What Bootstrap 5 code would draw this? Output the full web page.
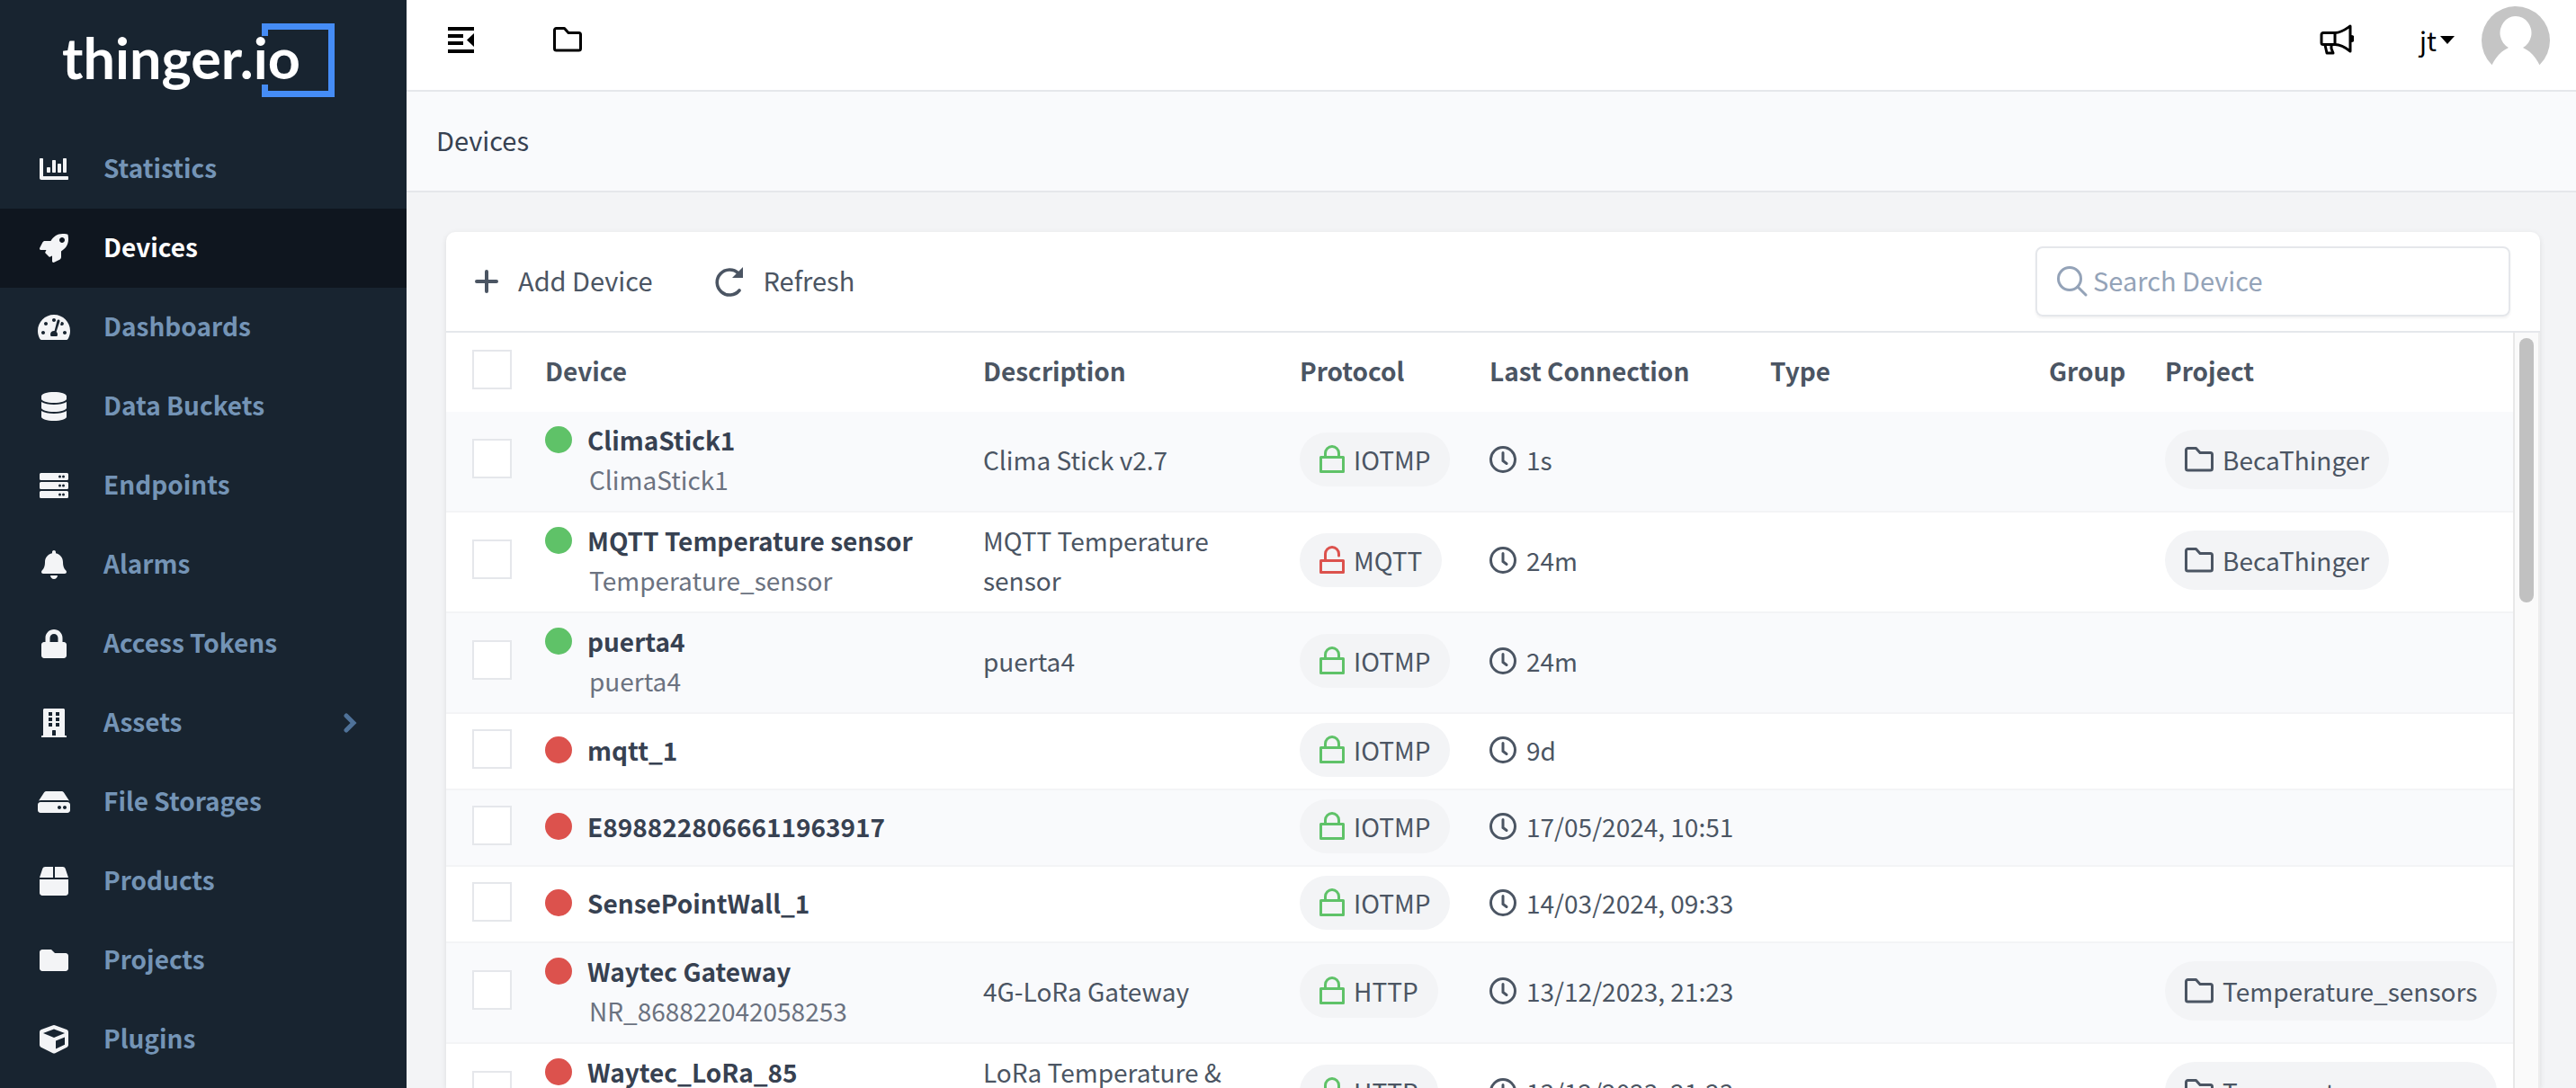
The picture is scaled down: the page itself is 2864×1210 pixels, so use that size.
<!DOCTYPE html>
<html lang="en">
<head>
<meta charset="utf-8">
<meta name="viewport" content="width=device-width, initial-scale=1">
<title>Devices</title>
<link href="https://cdn.jsdelivr.net/npm/bootstrap@5.3.0/dist/css/bootstrap.min.css" rel="stylesheet">
<style>
  :root { --side: #182430; --line: #e5e7eb; --ink: #4b5563; --ink-dark: #374151; }
  body { font-family: "Noto Sans CJK SC", "Open Sans", sans-serif; font-size: 28px; line-height: 44px; color: var(--ink); background: #f3f4f6; height: 100vh; overflow: hidden; }
  svg { display: block; flex: none; }
  a { text-decoration: none; color: inherit; }
  .side-panel { width: 452px; background: var(--side); flex: none; overflow: hidden; }
  .brand-box { height: 144px; padding: 20px 0 0 60px; }
  .side-panel .nav-link { height: 88px; padding: 0 54px 0 36px; color: #7494b6; font-weight: 700; display: flex; align-items: center; }
  .side-panel .nav-link.active { background: #0f161f; color: #fff; }
  .side-icon { width: 48px; margin-right: 31px; display: flex; justify-content: center; flex: none; fill: #f3f4f6; }
  .top-strip { height: 102px; padding: 0 28px 12px 40px; background: #fff; border-bottom: 2px solid var(--line); color: #000; flex: none; font-size: 29px; }
  .plain-btn { border: 0; background: none; padding: 0; color: inherit; display: flex; align-items: center; }
  .top-left { gap: 86px; }
  .top-right { gap: 73px; }
  .user-box { gap: 29px; }
  .crumb-strip { height: 112px; padding: 0 33px; background: #f9fafc; border-bottom: 2px solid var(--line); color: var(--ink-dark); flex: none; font-size: 29px; }
  .page-body { padding: 44px 40px 0 44px; min-height: 0; }
  .device-card { border: 0; border-radius: 10px 10px 0 0; box-shadow: 0 2px 6px rgba(0,0,0,.1); overflow: hidden; min-height: 0; color: inherit; }
  .tool-strip { height: 112px; padding: 0 33px 0 32px; border-bottom: 2px solid var(--line); flex: none; font-size: 29px; }
  .tool-strip .plain-btn { gap: 22px; }
  .tool-group { gap: 67px; }
  .search-box { width: 528px; height: 78px; border: 2px solid var(--line); border-radius: 8px; padding: 0 22px; gap: 6px; box-shadow: 0 2px 3px rgba(0,0,0,.05); color: #94a3b8; }
  .search-box input { border: 0; outline: 0; background: none; padding: 0 0 4px; flex: 1; min-width: 0; color: var(--ink-dark); }
  .search-box input::placeholder { color: #94a3b8; opacity: 1; }
  .device-table { table-layout: fixed; width: 100%; border-collapse: separate; border-spacing: 0; }
  .device-table th { height: 88px; padding: 0 10px 4px; vertical-align: middle; font-weight: 700; }
  .device-table td { height: 85px; padding: 9px 10px 13px; vertical-align: middle; border-bottom: 2px solid #f3f4f6; }
  .device-table tbody tr:nth-child(odd) { background: #f9fafc; }
  .device-table tr > :first-child { padding: 0 0 6px 29px; }
  .device-table .form-check-input { display: block; width: 44px; height: 44px; margin: 0; border: 2px solid var(--line); border-radius: 0; }
  .dot { width: 30px; height: 30px; border-radius: 50%; background: #dc524d; margin-right: 17px; flex: none; }
  .dot.on { background: #5fc268; }
  .dev-name { font-weight: 700; color: var(--ink-dark); }
  .dev-sub { color: #6b7280; padding-left: 49px; }
  .proto-pill { display: inline-flex; align-items: center; gap: 10px; height: 60px; padding: 0 22px; border-radius: 30px; background: #f3f4f6; vertical-align: middle; }
  .proj-pill { display: inline-flex; align-items: center; gap: 10px; height: 66px; padding: 0 22px; border-radius: 33px; background: #f3f4f6; vertical-align: middle; margin: -2px 0; }
  .since { display: flex; align-items: center; gap: 11px; }
  .rail { width: 30px; border-left: 2px solid #e8e8e8; border-right: 2px solid #ededed; background: #fafafa; padding: 6px 5px; flex: none; }
  .rail-thumb { height: 294px; border-radius: 8px; background: #c1c1c1; }
</style>
</head>
<body class="d-flex">
<svg width="0" height="0" class="position-absolute" aria-hidden="true">
  <symbol id="lock" viewBox="0 0 28 32"><g fill="none" stroke="#5fc268" stroke-width="3" stroke-linejoin="round"><path d="M1.500 13.500h25v16h-25z"/><path d="M6.500 13V9a7.500 7.500 0 0 1 15 0v4"/></g></symbol>
  <symbol id="unlock" viewBox="0 0 28 32"><g fill="none" stroke="#dc524d" stroke-width="3" stroke-linejoin="round" stroke-linecap="round"><path d="M1.500 16.500h25v13h-25z"/><path d="M6.500 16V9a7.500 7.500 0 0 1 15 0v2"/></g></symbol>
  <symbol id="clock" viewBox="0 0 30 30"><g fill="none" stroke="#4b5563" stroke-width="3" stroke-linecap="round"><circle cx="15" cy="15" r="13.500"/><path d="M15 7.500V16.500l4 3"/></g></symbol>
  <symbol id="folder" viewBox="0 0 32 28"><path d="M3.500 1.500h9l4.500 5h11.500a2 2 0 0 1 2 2v15.500a2 2 0 0 1-2 2h-25a2 2 0 0 1-2-2V3.500a2 2 0 0 1 2-2z" fill="none" stroke="currentColor" stroke-width="3" stroke-linejoin="round"/></symbol>
</svg>

<nav class="side-panel d-flex flex-column" aria-label="Main">
  <a class="brand-box d-block" href="#" aria-label="thinger.io">
    <svg width="320" height="100" viewBox="0 0 320 100">
      <path d="M234.500 20V9.500h74v75h-74V74" fill="none" stroke="#458cf5" stroke-width="7"/>
      <text x="9" y="68" font-family="Lato, sans-serif" font-weight="700" font-size="63" fill="#fff">thinger.io</text>
    </svg>
  </a>
  <div class="nav flex-column flex-nowrap">
    <a class="nav-link" href="#"><span class="side-icon"><svg width="32" height="32" viewBox="0 0 512 512"><path d="M332.800 320h38.400c6.400 0 12.800-6.400 12.800-12.800V172.800c0-6.400-6.400-12.800-12.800-12.800h-38.400c-6.400 0-12.800 6.400-12.800 12.800v134.400c0 6.400 6.400 12.800 12.800 12.800zm96 0h38.400c6.400 0 12.800-6.400 12.800-12.800V76.800c0-6.400-6.400-12.800-12.800-12.800h-38.400c-6.400 0-12.800 6.400-12.800 12.800v230.400c0 6.400 6.400 12.800 12.800 12.800zm-288 0h38.400c6.400 0 12.800-6.400 12.800-12.800v-70.400c0-6.400-6.400-12.800-12.800-12.800h-38.400c-6.400 0-12.800 6.400-12.800 12.800v70.400c0 6.400 6.400 12.800 12.800 12.800zm96 0h38.400c6.400 0 12.800-6.400 12.800-12.800V108.800c0-6.400-6.400-12.800-12.800-12.800h-38.400c-6.400 0-12.800 6.400-12.800 12.800v198.400c0 6.400 6.400 12.800 12.800 12.800zM496 384H64V80c0-8.840-7.160-16-16-16H16C7.160 64 0 71.160 0 80v336c0 17.670 14.330 32 32 32h464c8.840 0 16-7.160 16-16v-32c0-8.840-7.160-16-16-16z"/></svg></span><span class="pb-1">Statistics</span></a>
    <a class="nav-link active" aria-current="page" href="#"><span class="side-icon"><svg width="32" height="32" viewBox="0 0 512 512"><path d="M505.100 19.100C503.800 13 499 8.200 492.900 6.900 460.700 0 435.500 0 410.400 0 307.200 0 245.300 55.200 199.100 128H94.900c-18.200 0-34.800 10.300-42.900 26.500L2.600 253.300c-8 16 3.600 34.700 21.500 34.700h95.100c-5.900 12.800-11.900 25.500-18 37.700-3.100 6.200-1.900 13.600 3 18.500l63.600 63.600c4.900 4.900 12.300 6.100 18.500 3 12.200-6.100 24.900-12 37.700-17.900V488c0 17.800 18.800 29.400 34.700 21.500l98.700-49.400c16.300-8.100 26.500-24.800 26.500-42.900V312.800c72.600-46.300 128-108.400 128-211.100.1-25.200.1-50.400-6.800-82.600zM400 160c-26.500 0-48-21.500-48-48s21.500-48 48-48 48 21.500 48 48-21.500 48-48 48z"/></svg></span><span class="pb-1">Devices</span></a>
    <a class="nav-link" href="#"><span class="side-icon"><svg width="36" height="32" viewBox="0 0 576 512"><path fill-rule="evenodd" d="M288 32C128.900 32 0 160.900 0 320c0 52.800 14.300 102.300 39.100 144.800 5.600 9.600 16.300 15.200 27.400 15.200h443c11.100 0 21.800-5.600 27.400-15.200C561.800 422.300 576 372.800 576 320 576 160.900 447.100 32 288 32zm0 64c17.700 0 32 14.300 32 32s-14.300 32-32 32-32-14.300-32-32 14.300-32 32-32zM96 384c-17.700 0-32-14.300-32-32s14.300-32 32-32 32 14.300 32 32-14.300 32-32 32zm48-160c-17.700 0-32-14.300-32-32s14.300-32 32-32 32 14.300 32 32-14.300 32-32 32zm246.800-72.400-61.300 184c13.300 11.400 22.500 27.600 22.500 46.400 0 12.600-4.200 23.200-9.600 34H233.600c-5.400-10.800-9.600-21.400-9.600-34 0-35.300 28.700-62 64-62 3.700 0 6.100.6 9.400 1.100l47.800-184.700c4.200-12.600 17.800-19.400 30.400-15.200 12.500 4.200 19.300 17.800 15.200 30.400zM480 384c-17.700 0-32-14.300-32-32s14.300-32 32-32 32 14.300 32 32-14.300 32-32 32zm-50-160c-14 0-25-8-29-18l15-44c20-8 46 4 46 30 0 17.700-14.300 32-32 32z"/></svg></span><span class="pb-1">Dashboards</span></a>
    <a class="nav-link" href="#"><span class="side-icon"><svg width="28" height="32" viewBox="0 0 448 512"><path d="M448 73.100v45.800C448 159.100 347.700 192 224 192S0 159.100 0 118.900V73.100C0 32.900 100.300 0 224 0s224 32.900 224 73.100zM448 176v102.900C448 319.100 347.700 352 224 352S0 319.100 0 278.900V176c48.100 33.100 136.200 48.600 224 48.600S399.900 209.100 448 176zm0 160v102.900C448 479.100 347.700 512 224 512S0 479.100 0 438.900V336c48.100 33.100 136.200 48.600 224 48.600S399.900 369.100 448 336z"/></svg></span><span class="pb-1">Data Buckets</span></a>
    <a class="nav-link" href="#"><span class="side-icon"><svg width="32" height="32" viewBox="0 0 512 512"><path fill-rule="evenodd" d="M24 32h464a24 24 0 0 1 24 24v80a24 24 0 0 1-24 24H24a24 24 0 0 1-24-24V56a24 24 0 0 1 24-24zm336 40a24 24 0 1 0 0 48 24 24 0 0 0 0-48zm64 0a24 24 0 1 0 0 48 24 24 0 0 0 0-48zM24 192h464a24 24 0 0 1 24 24v80a24 24 0 0 1-24 24H24a24 24 0 0 1-24-24v-80a24 24 0 0 1 24-24zm336 40a24 24 0 1 0 0 48 24 24 0 0 0 0-48zm64 0a24 24 0 1 0 0 48 24 24 0 0 0 0-48zM24 352h464a24 24 0 0 1 24 24v80a24 24 0 0 1-24 24H24a24 24 0 0 1-24-24v-80a24 24 0 0 1 24-24zm336 40a24 24 0 1 0 0 48 24 24 0 0 0 0-48zm64 0a24 24 0 1 0 0 48 24 24 0 0 0 0-48z"/></svg></span><span class="pb-1">Endpoints</span></a>
    <a class="nav-link" href="#"><span class="side-icon"><svg width="28" height="32" viewBox="0 0 448 512"><path d="M224 512c35.300 0 64-28.700 64-64H160c0 35.300 28.600 64 64 64zm215.400-149.700c-19.300-20.800-55.500-52-55.500-154.300 0-77.700-54.500-139.900-127.900-155.200V32c0-17.700-14.300-32-32-32s-32 14.300-32 32v20.800C118.600 68.100 64.100 130.300 64.100 208c0 102.300-36.200 133.500-55.500 154.300C2.600 368.700 0 376.400 0 384c.1 16.400 13 32 32.100 32h383.800c19.100 0 32-15.600 32.100-32 0-7.600-2.600-15.300-8.600-21.700z"/></svg></span><span class="pb-1">Alarms</span></a>
    <a class="nav-link" href="#"><span class="side-icon"><svg width="28" height="32" viewBox="0 0 448 512"><path d="M400 224h-24v-72C376 68.200 307.800 0 224 0S72 68.200 72 152v72H48c-26.500 0-48 21.500-48 48v192c0 26.500 21.500 48 48 48h352c26.500 0 48-21.500 48-48V272c0-26.500-21.500-48-48-48zm-104 0H152v-72c0-39.700 32.300-72 72-72s72 32.300 72 72v72z"/></svg></span><span class="pb-1">Access Tokens</span></a>
    <a class="nav-link" href="#"><span class="side-icon"><svg width="28" height="32" viewBox="0 0 448 512"><path fill-rule="evenodd" d="M436 480h-20V24c0-13.300-10.700-24-24-24H56C42.700 0 32 10.700 32 24v456H12c-6.600 0-12 5.400-12 12v20h448v-20c0-6.600-5.400-12-12-12zM128 64h64v64h-64zm0 96h64v64h-64zm0 96h64v64h-64zm128-192h64v64h-64zm0 96h64v64h-64zm0 96h64v64h-64zM192 480v-84c0-6.600 5.400-12 12-12h40c6.600 0 12 5.400 12 12v84z"/></svg></span><span class="pb-1">Assets</span>
      <svg class="ms-auto" width="20" height="22" viewBox="0 0 20 22"><path d="M7 3l8 8-8 8" fill="none" stroke="#4f7299" stroke-width="5" stroke-linecap="round"/></svg></a>
    <a class="nav-link" href="#"><span class="side-icon"><svg width="36" height="32" viewBox="0 0 576 512"><path fill-rule="evenodd" d="M576 304v96c0 26.500-21.500 48-48 48H48c-26.500 0-48-21.500-48-48v-96c0-26.500 21.500-48 48-48h480c26.500 0 48 21.500 48 48zm-48-80a79.600 79.600 0 0 1 30.800 6.200L462.300 85.400A48 48 0 0 0 422.300 64H153.700a48 48 0 0 0-40 21.400L17.200 230.200A79.600 79.600 0 0 1 48 224h480zM480 320c-17.700 0-32 14.300-32 32s14.300 32 32 32 32-14.300 32-32-14.300-32-32-32zm-96 0c-17.700 0-32 14.300-32 32s14.300 32 32 32 32-14.300 32-32-14.300-32-32-32z"/></svg></span><span class="pb-1">File Storages</span></a>
    <a class="nav-link" href="#"><span class="side-icon"><svg width="32" height="32" viewBox="0 0 512 512"><path d="M509.500 184.600 458.900 32.800C452.400 13.200 434.100 0 413.400 0H272v192h238.700c-.4-2.500-.4-5-1.200-7.400zM240 0H98.600c-20.700 0-39 13.200-45.500 32.800L2.500 184.600c-.8 2.400-.8 4.900-1.200 7.400H240V0zM0 224v240c0 26.500 21.500 48 48 48h416c26.500 0 48-21.500 48-48V224H0z"/></svg></span><span class="pb-1">Products</span></a>
    <a class="nav-link" href="#"><span class="side-icon"><svg width="32" height="32" viewBox="0 0 512 512"><path d="M464 128H272l-64-64H48C21.500 64 0 85.500 0 112v288c0 26.500 21.500 48 48 48h416c26.500 0 48-21.500 48-48V176c0-26.500-21.500-48-48-48z"/></svg></span><span class="pb-1">Projects</span></a>
    <a class="nav-link" href="#"><span class="side-icon"><svg width="32" height="32" viewBox="0 0 512 512"><path fill-rule="evenodd" d="M239 4 31 81a48 48 0 0 0-31 45v226c0 18 10 35 27 43l208 104c14 7 29 7 43 0l208-104c16-8 26-25 26-43V126c0-20-12-38-31-45L273 4a48 48 0 0 0-34 0zm17 68 192 72v1l-192 78-192-78v-1zm32 353V280l160-66v132z"/></svg></span><span class="pb-1">Plugins</span></a>
  </div>
</nav>

<div class="d-flex flex-column flex-grow-1 overflow-hidden">
  <header class="top-strip d-flex align-items-center justify-content-between">
    <div class="top-left d-flex align-items-center">
      <button class="plain-btn ps-1" type="button" aria-label="Collapse menu"><svg width="32" height="32" viewBox="0 0 32 32"><path d="M2 2h29v4H2zM2 10h17v4H2zM2 18h17v4H2zM2 27h29v4H2zM31 9v15l-8-7.500z"/></svg></button>
      <button class="plain-btn" type="button" aria-label="Projects"><svg width="34" height="28"><use href="#folder"/></svg></button>
    </div>
    <div class="top-right d-flex align-items-center">
      <button class="plain-btn" type="button" aria-label="Announcements"><svg width="38" height="34" viewBox="0 0 38 34"><g fill="none" stroke="#000" stroke-width="3" stroke-linejoin="round"><path d="M4 9.500h13v13H4a2 2 0 0 1-2-2v-9a2 2 0 0 1 2-2z"/><path d="M17 9.500c7 0 12-4 17-7.500v28c-5-4-10-7.500-17-7.500"/><path d="M6 23l2 9h7l-2-5v-4"/></g><path d="M35 12a4 4 0 0 1 0 8z"/></svg></button>
      <div class="user-box d-flex align-items-center">
        <button class="plain-btn gap-1" type="button" aria-haspopup="true"><span>jt</span><svg width="16" height="9" viewBox="0 0 16 9"><path d="M0 0h16L8 9z"/></svg></button>
        <svg width="78" height="78" viewBox="0 0 78 78" role="img" aria-label="jt"><circle cx="39" cy="40" r="38" fill="#c5c5c5"/><path d="M9 78c3-14 11-25 22-30a17.500 18.500 0 1 1 16 0c11 5 19 16 22 30z" fill="#fff"/></svg>
      </div>
    </div>
  </header>
  <div class="crumb-strip d-flex align-items-center"><span class="pb-1">Devices</span></div>
  <main class="page-body d-flex flex-column flex-grow-1">
    <section class="card device-card flex-grow-1">
      <div class="tool-strip d-flex align-items-center justify-content-between">
        <div class="tool-group d-flex align-items-center">
          <button class="plain-btn" type="button"><svg width="26" height="26" viewBox="0 0 26 26"><path d="M13 2v22M2 13h22" stroke="#4b5563" stroke-width="4" stroke-linecap="round"/></svg><span class="pb-1">Add Device</span></button>
          <button class="plain-btn" type="button"><svg width="34" height="34" viewBox="0 0 34 34"><path d="M28 8a14 14 0 1 0 1 19" fill="none" stroke="#4b5563" stroke-width="3.600" stroke-linecap="round"/><path d="M33 1v12H21z" fill="#4b5563"/></svg><span class="pb-1">Refresh</span></button>
        </div>
        <label class="search-box d-flex align-items-center"><svg width="34" height="34" viewBox="0 0 34 34"><g fill="none" stroke="currentColor" stroke-width="3" stroke-linecap="round"><circle cx="14" cy="14" r="12.500"/><path d="M23 23l9 9"/></g></svg><input type="search" placeholder="Search Device" aria-label="Search Device"></label>
      </div>
      <div class="d-flex flex-grow-1 overflow-hidden">
        <div class="flex-grow-1 overflow-hidden">
          <table class="device-table">
            <colgroup><col style="width:100px"><col style="width:487px"><col style="width:352px"><col style="width:211px"><col style="width:312px"><col style="width:310px"><col style="width:129px"><col></colgroup>
            <thead><tr><th><input class="form-check-input" type="checkbox" aria-label="Select all"></th><th>Device</th><th>Description</th><th>Protocol</th><th>Last Connection</th><th>Type</th><th>Group</th><th>Project</th></tr></thead>
            <tbody>
              <tr><td><input class="form-check-input" type="checkbox" aria-label="ClimaStick1"></td><td><div class="dev-name d-flex align-items-center"><span class="dot on"></span>ClimaStick1</div><div class="dev-sub">ClimaStick1</div></td><td>Clima Stick v2.7</td><td><span class="proto-pill"><svg width="28" height="32"><use href="#lock"/></svg>IOTMP</span></td><td><span class="since"><svg width="30" height="30"><use href="#clock"/></svg>1s</span></td><td></td><td></td><td><a class="proj-pill" href="#"><svg width="32" height="28"><use href="#folder"/></svg>BecaThinger</a></td></tr>
              <tr><td><input class="form-check-input" type="checkbox" aria-label="MQTT Temperature sensor"></td><td><div class="dev-name d-flex align-items-center"><span class="dot on"></span>MQTT Temperature sensor</div><div class="dev-sub">Temperature_sensor</div></td><td>MQTT Temperature sensor</td><td><span class="proto-pill"><svg width="28" height="32"><use href="#unlock"/></svg>MQTT</span></td><td><span class="since"><svg width="30" height="30"><use href="#clock"/></svg>24m</span></td><td></td><td></td><td><a class="proj-pill" href="#"><svg width="32" height="28"><use href="#folder"/></svg>BecaThinger</a></td></tr>
              <tr><td><input class="form-check-input" type="checkbox" aria-label="puerta4"></td><td><div class="dev-name d-flex align-items-center"><span class="dot on"></span>puerta4</div><div class="dev-sub">puerta4</div></td><td>puerta4</td><td><span class="proto-pill"><svg width="28" height="32"><use href="#lock"/></svg>IOTMP</span></td><td><span class="since"><svg width="30" height="30"><use href="#clock"/></svg>24m</span></td><td></td><td></td><td></td></tr>
              <tr><td><input class="form-check-input" type="checkbox" aria-label="mqtt_1"></td><td><div class="dev-name d-flex align-items-center"><span class="dot"></span>mqtt_1</div></td><td></td><td><span class="proto-pill"><svg width="28" height="32"><use href="#lock"/></svg>IOTMP</span></td><td><span class="since"><svg width="30" height="30"><use href="#clock"/></svg>9d</span></td><td></td><td></td><td></td></tr>
              <tr><td><input class="form-check-input" type="checkbox" aria-label="E8988228066611963917"></td><td><div class="dev-name d-flex align-items-center"><span class="dot"></span>E8988228066611963917</div></td><td></td><td><span class="proto-pill"><svg width="28" height="32"><use href="#lock"/></svg>IOTMP</span></td><td><span class="since"><svg width="30" height="30"><use href="#clock"/></svg>17/05/2024, 10:51</span></td><td></td><td></td><td></td></tr>
              <tr><td><input class="form-check-input" type="checkbox" aria-label="SensePointWall_1"></td><td><div class="dev-name d-flex align-items-center"><span class="dot"></span>SensePointWall_1</div></td><td></td><td><span class="proto-pill"><svg width="28" height="32"><use href="#lock"/></svg>IOTMP</span></td><td><span class="since"><svg width="30" height="30"><use href="#clock"/></svg>14/03/2024, 09:33</span></td><td></td><td></td><td></td></tr>
              <tr><td><input class="form-check-input" type="checkbox" aria-label="Waytec Gateway"></td><td><div class="dev-name d-flex align-items-center"><span class="dot"></span>Waytec Gateway</div><div class="dev-sub">NR_868822042058253</div></td><td>4G-LoRa Gateway</td><td><span class="proto-pill"><svg width="28" height="32"><use href="#lock"/></svg>HTTP</span></td><td><span class="since"><svg width="30" height="30"><use href="#clock"/></svg>13/12/2023, 21:23</span></td><td></td><td></td><td><a class="proj-pill" href="#"><svg width="32" height="28"><use href="#folder"/></svg>Temperature_sensors</a></td></tr>
              <tr><td><input class="form-check-input" type="checkbox" aria-label="Waytec_LoRa_85"></td><td><div class="dev-name d-flex align-items-center"><span class="dot"></span>Waytec_LoRa_85</div><div class="dev-sub">&nbsp;</div></td><td>LoRa Temperature &amp;<br>&nbsp;</td><td><span class="proto-pill"><svg width="28" height="32"><use href="#lock"/></svg>HTTP</span></td><td><span class="since"><svg width="30" height="30"><use href="#clock"/></svg>13/12/2023, 21:23</span></td><td></td><td></td><td><a class="proj-pill" href="#"><svg width="32" height="28"><use href="#folder"/></svg>Temperature_sensors</a></td></tr>
            </tbody>
          </table>
        </div>
        <div class="rail"><div class="rail-thumb"></div></div>
      </div>
    </section>
  </main>
</div>
<script src="https://cdn.jsdelivr.net/npm/bootstrap@5.3.0/dist/js/bootstrap.bundle.min.js"></script>
</body>
</html>
